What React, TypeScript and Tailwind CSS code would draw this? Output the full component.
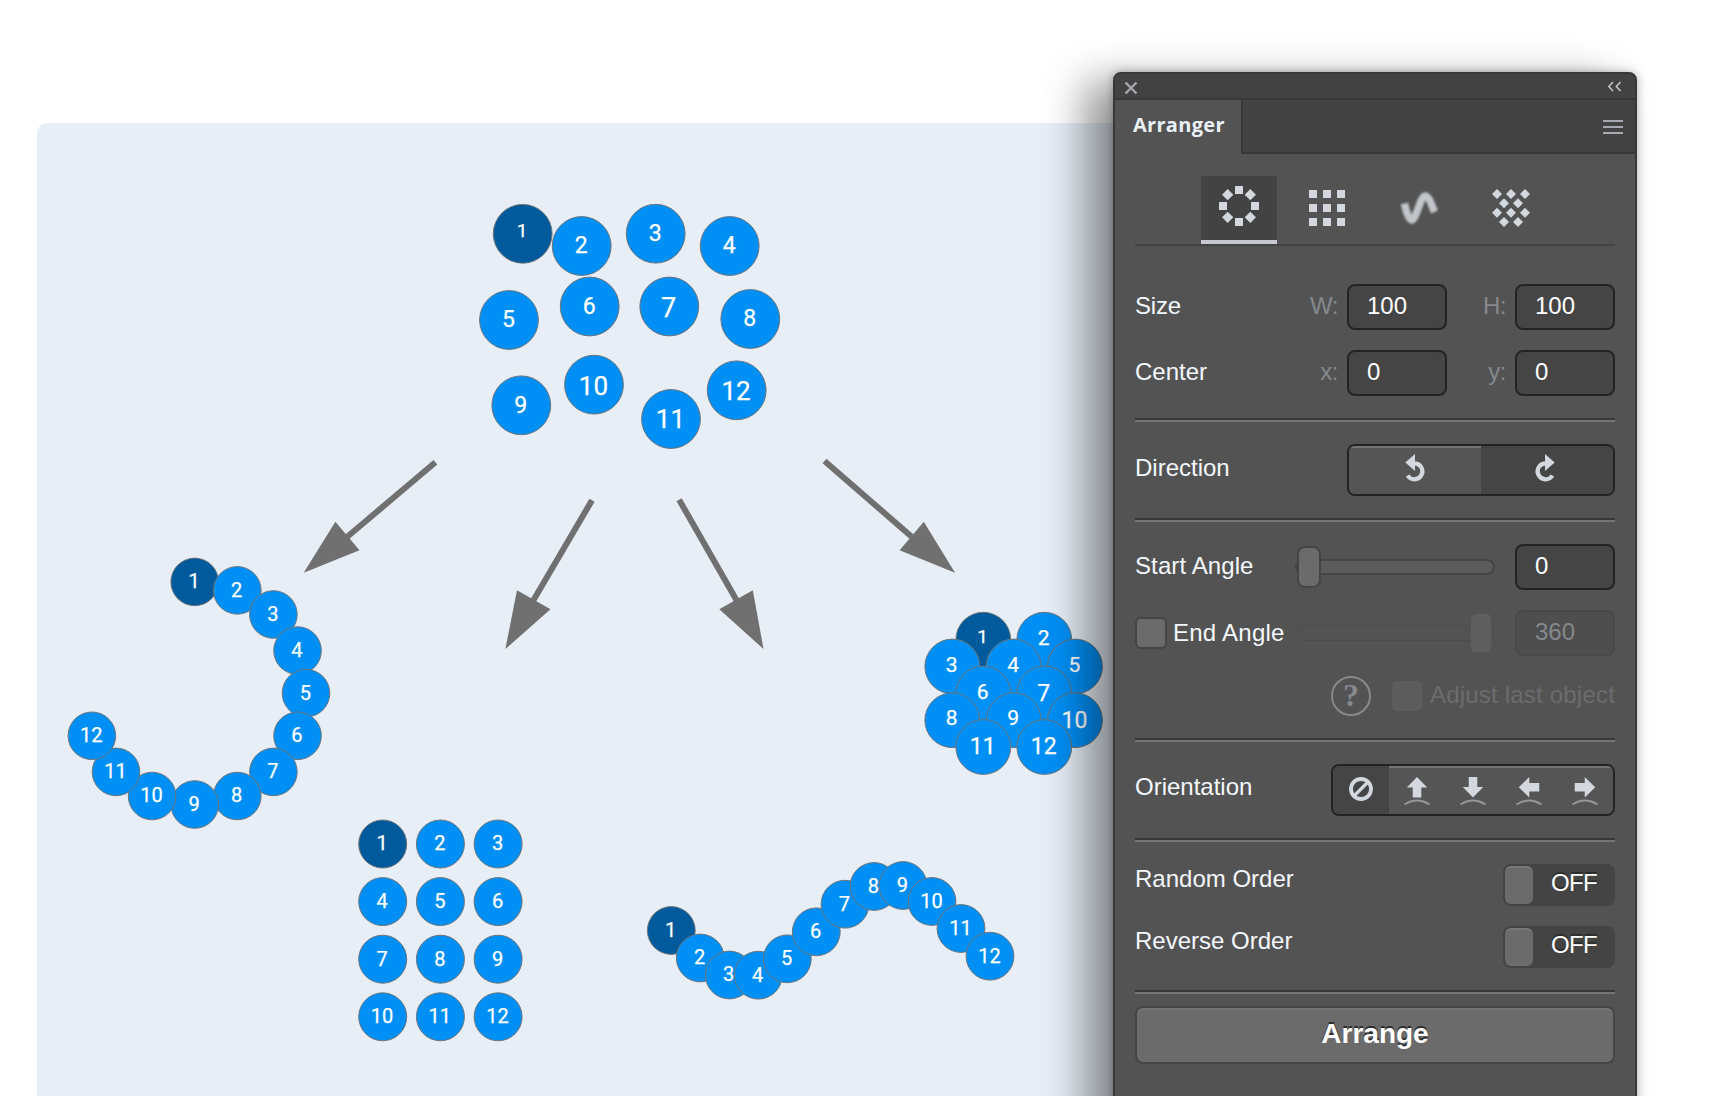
import React, { useState } from "react";
import clsx from "clsx";

type Dot = { x: number; y: number; size?: number; dy?: number };

const scattered: Dot[] = [
  { x: 522.7, y: 233.8, size: 19, dy: -4 },
  { x: 581.7, y: 246, size: 23 },
  { x: 655.7, y: 233.7, size: 23 },
  { x: 729.7, y: 246, size: 23 },
  { x: 509, y: 320, size: 23 },
  { x: 589.7, y: 306.5, size: 23 },
  { x: 669.3, y: 306.5, size: 27, dy: 0.5 },
  { x: 750.3, y: 319, size: 23 },
  { x: 521.3, y: 405.3, size: 23 },
  { x: 594, y: 384.7, size: 26, dy: 1 },
  { x: 671, y: 419, size: 26, dy: 0 },
  { x: 736.7, y: 390.3, size: 26, dy: 0.7 },
];

const ring: Dot[] = Array.from({ length: 12 }, (_v, i) => {
  const a = ((i * 22.5 - 90) * Math.PI) / 180;
  return { x: 194.7 + 111.3 * Math.cos(a), y: 693.2 + 111.3 * Math.sin(a) };
});

const grid: Dot[] = Array.from({ length: 12 }, (_v, i) => ({
  x: 382.7 + (i % 3) * 57.7,
  y: 844 + Math.floor(i / 3) * 57.6,
}));

const wave: Dot[] = [
  { x: 671.3, y: 930.5 },
  { x: 700.3, y: 958 },
  { x: 729.3, y: 975 },
  { x: 758.3, y: 975.2 },
  { x: 787.3, y: 958.8 },
  { x: 816.3, y: 931.8 },
  { x: 845, y: 904.2 },
  { x: 874, y: 886.5 },
  { x: 903, y: 885.5 },
  { x: 932, y: 901.5 },
  { x: 961, y: 928.5 },
  { x: 990, y: 956.2 },
];

const honeycomb: Dot[] = [
  { x: 983.3, y: 639.7, size: 19, dy: -3 },
  { x: 1044.3, y: 639.7, size: 21, dy: -2 },
  { x: 952.3, y: 666.5, size: 21, dy: -2 },
  { x: 1013.7, y: 666.5, size: 21, dy: -1.5 },
  { x: 1075, y: 666.5, size: 21, dy: -1.5 },
  { x: 983.3, y: 693.4, size: 21, dy: -1.5 },
  { x: 1044.3, y: 693.4, size: 23, dy: -0.5 },
  { x: 952.3, y: 720.2, size: 21, dy: -2.5 },
  { x: 1013.7, y: 720.2, size: 21, dy: -2.5 },
  { x: 1075, y: 720.2, size: 23, dy: -0.7 },
  { x: 983.3, y: 747, size: 23, dy: -0.7 },
  { x: 1044.3, y: 747, size: 23, dy: -0.7 },
];

const arrows = [
  { line: [435.4, 462.3, 347, 537], head: "303.7,572.7 335.4,521.7 359.5,550.3" },
  { line: [592, 500.3, 533, 601], head: "505.4,649 517,590.3 550.5,609.3" },
  { line: [679.1, 499.7, 737, 601], head: "763.5,649 752.8,590.3 719.3,609.3" },
  { line: [824.5, 461, 912, 537], head: "955,572.7 923.8,521.7 899.6,550.3" },
];

const Dots = ({ dots, r }: { dots: Dot[]; r: number }) => (
  <g>
    {dots.map((d, i) => {
      const size = d.size ?? 20;
      return (
        <g key={i}>
          <circle
            cx={d.x}
            cy={d.y}
            r={r}
            fill={i === 0 ? "#005a9c" : "#008ff5"}
            stroke="#6f7579"
            strokeWidth="1"
          />
          <text
            x={d.x - 0.6}
            y={d.y + size * 0.356 + (d.dy ?? -0.8)}
            fontSize={size}
            fill="#fff"
            stroke="#fff"
            strokeWidth="0.25"
            textAnchor="middle"
          >
            {i + 1}
          </text>
        </g>
      );
    })}
  </g>
);

const Divider = () => (
  <div className="h-1 shrink-0 border-t-2 border-b-2 border-t-[#383838] border-b-[#757575]" />
);

const Field = ({
  value,
  disabled,
  indent = 18,
}: {
  value: string;
  disabled?: boolean;
  indent?: number;
}) => (
  <div
    className={clsx(
      "flex h-[46px] w-[100px] items-center rounded-lg border-2 pb-[3px]",
      disabled
        ? "border-[#484848] bg-[#4e4e4e] text-[#85888c]"
        : "border-[#232323] bg-[#454545] text-white"
    )}
    style={{ paddingLeft: indent }}
  >
    {value}
  </div>
);

const Hint = ({ children }: { children: React.ReactNode }) => (
  <span className="w-[68px] pr-[9px] pb-[3px] text-right tracking-[-0.5px] text-[#85888c]">
    {children}
  </span>
);

const Toggle = ({ on, onClick }: { on: boolean; onClick: () => void }) => (
  <button
    className={clsx(
      "flex h-[42px] w-28 items-center rounded-lg bg-[#444] p-0.5",
      on && "flex-row-reverse"
    )}
    onClick={onClick}
  >
    <span className="h-[38px] w-7 rounded-md border-t-2 border-[#787878] bg-[#6b6b6b]" />
    <span className="flex-1 pb-[5px] pl-0.5 text-center tracking-[-0.7px] text-white [text-shadow:0_-2px_0_#2c2c2c]">
      {on ? "ON" : "OFF"}
    </span>
  </button>
);

const CircleIcon = () => (
  <svg width="40" height="40" viewBox="-20 -20 40 40" fill="#d2d8de">
    {[0, 45, 90, 135, 180, 225, 270, 315].map((a) => (
      <rect key={a} x="-4" y="-20" width="8" height="8" transform={`rotate(${a})`} />
    ))}
  </svg>
);

const GridIcon = () => (
  <svg width="36" height="36" viewBox="0 0 36 36" fill="#d2d8de">
    {[0, 14, 28].map((y) =>
      [0, 14, 28].map((x) => <rect key={`${x}-${y}`} x={x} y={y} width="8" height="8" />)
    )}
  </svg>
);

const WaveIcon = () => (
  <svg
    className="blur-[1px]"
    width="40"
    height="36"
    viewBox="0 0 40 36"
    fill="none"
    stroke="#c2c6ca"
    strokeWidth="7.500"
    strokeLinejoin="round"
  >
    <path d="M5.500 13.500C7 21 9.500 30 13 30C17 30 21.500 6 26 6C30 6 32 14 35.500 22" />
  </svg>
);

const HoneycombIcon = () => (
  <svg width="40" height="40" viewBox="0 0 40 40" fill="#d2d8de">
    {[
      [6, 6], [20, 6], [34, 6],
      [13, 15.3], [27, 15.3],
      [6, 24.7], [20, 24.7], [34, 24.7],
      [13, 34], [27, 34],
    ].map(([x, y]) => (
      <path key={`${x}-${y}`} d={`M${x} ${y - 5}l5 5-5 5-5-5z`} />
    ))}
  </svg>
);

const TurnIcon = ({ flip }: { flip?: boolean }) => (
  <svg
    className={clsx("mb-[7px]", flip && "mr-1 -scale-x-100")}
    width="24"
    height="30"
    viewBox="0 0 24 30"
  >
    <path d="M12 10.300A8 8 0 1 1 4.600 22.500" fill="none" stroke="#d2d8de" strokeWidth="4.200" />
    <path d="M12 1v17L2.300 9.500z" fill="#d2d8de" />
  </svg>
);

const ArrowIcon = ({ angle }: { angle: number }) => (
  <svg width="28" height="30" viewBox="0 0 28 30">
    <path
      d="M14 1L24.200 11.500H18.300V21.500H9.700V11.500H3.800z"
      fill="#d2d8de"
      transform={`rotate(${angle} 14 11.250)`}
    />
    <path d="M1.500 28.500Q14 20.500 26.500 28.500" fill="none" stroke="#94979c" strokeWidth="1.800" />
  </svg>
);

const tabs = [
  { name: "circle", icon: <CircleIcon />, style: "ml-[66px] w-[76px] pt-[10px]" },
  { name: "grid", icon: <GridIcon />, style: "ml-3 w-[76px] pt-[14px]" },
  { name: "wave", icon: <WaveIcon />, style: "ml-4 w-[76px] pt-[14px]" },
  { name: "honeycomb", icon: <HoneycombIcon />, style: "ml-4 w-[76px] pt-3" },
];

const App = () => {
  const [tab, setTab] = useState<string>("circle");
  const [clockwise, setClockwise] = useState<boolean>(true);
  const [orientation, setOrientation] = useState<number>(0);
  const [random, setRandom] = useState<boolean>(false);
  const [reverse, setReverse] = useState<boolean>(false);

  return (
    <div className="relative h-[1096px] w-full overflow-hidden bg-white pt-[123px] pl-[37px] font-['Liberation_Sans',Arial,sans-serif]">
      <div className="h-[973px] w-[1200px] rounded-tl-[10px] bg-[#e7eef6]">
        <svg
          width="1200"
          height="973"
          viewBox="37 123 1200 973"
          className="font-['Roboto',sans-serif]"
        >
          {arrows.map(({ line: [x1, y1, x2, y2], head }) => (
            <g key={head}>
              <line x1={x1} y1={y1} x2={x2} y2={y2} stroke="#707070" strokeWidth="6" />
              <polygon points={head} fill="#707070" />
            </g>
          ))}
          <Dots dots={scattered} r={29.4} />
          <Dots dots={ring} r={23.8} />
          <Dots dots={grid} r={24} />
          <Dots dots={wave} r={23.9} />
          <Dots dots={honeycomb} r={27.4} />
        </svg>
      </div>

      {/* floating panel */}
      <div className="absolute top-[72px] left-[1113px] flex h-[1060px] w-[524px] flex-col rounded-t-lg border-2 border-[#383838] bg-[#535353] text-2xl leading-7 text-[#f4f8fc] shadow-[-28px_10px_42px_rgba(0,0,0,0.42),0_0_10px_rgba(0,0,0,0.3)]">
        <div className="flex h-[26px] items-center justify-between rounded-t-md border-b-2 border-[#383838] bg-[#424242] pr-[13px] pl-[9px]">
          <svg className="mt-[3px]" width="14" height="14" viewBox="0 0 14 14" stroke="#a3a6ab" strokeWidth="2.400">
            <path d="M1.500 1.500L12.500 12.500M12.500 1.500L1.500 12.500" />
          </svg>
          <svg className="mt-px" width="15" height="11" viewBox="0 0 15 11" fill="none" stroke="#c0c4ca" strokeWidth="1.600">
            <path d="M6 1L1.800 5.500L6 10M13.500 1L9.300 5.500L13.500 10" />
          </svg>
        </div>
        <div className="flex h-[54px]">
          <div className="w-[126px] pt-[11px] pl-[18px] font-['Open_Sans',sans-serif] text-[20px] font-bold tracking-[0.3px] text-[#e9f0f8]">
            Arranger
          </div>
          <div className="flex flex-1 items-start justify-end border-b-2 border-l-2 border-[#383838] bg-[#424242] pt-5 pr-3">
            <div className="flex w-5 flex-col gap-1">
              <span className="h-0.5 bg-[#a6aab0]" />
              <span className="h-0.5 bg-[#a6aab0]" />
              <span className="h-0.5 bg-[#a6aab0]" />
            </div>
          </div>
        </div>

        <div className="flex flex-1 flex-col px-5 pt-[22px]">
          <div className="flex h-[70px] border-b-2 border-[#434343]">
            {tabs.map((t) => (
              <button
                key={t.name}
                className={clsx(
                  "flex h-[68px] items-start justify-center border-b-4",
                  t.style,
                  tab === t.name ? "border-[#c6cad0] bg-[#434343]" : "border-transparent"
                )}
                onClick={() => setTab(t.name)}
              >
                {t.icon}
              </button>
            ))}
          </div>

          <div className="mt-[38px] flex h-[46px] items-center">
            <span className="flex-1 pb-[3px] tracking-[-0.2px]">Size</span>
            <Hint>W:</Hint>
            <Field value="100" />
            <Hint>H:</Hint>
            <Field value="100" />
          </div>
          <div className="mt-5 mb-[22px] flex h-[46px] items-center">
            <span className="flex-1 pb-[3px]">Center</span>
            <Hint>x:</Hint>
            <Field value="0" />
            <Hint>y:</Hint>
            <Field value="0" />
          </div>
          <Divider />

          <div className="my-[22px] flex h-[52px] items-center">
            <span className="flex-1 pb-[5px]">Direction</span>
            <div className="flex h-[52px] w-[268px] overflow-hidden rounded-lg border-2 border-[#232323]">
              {[false, true].map((cw) => (
                <button
                  key={String(cw)}
                  className={clsx(
                    "flex flex-1 items-center justify-center border-t-2",
                    clockwise === cw ? "border-[#434343] bg-[#454545]" : "border-[#757575] bg-[#555]"
                  )}
                  onClick={() => setClockwise(cw)}
                >
                  <TurnIcon flip={cw} />
                </button>
              ))}
            </div>
          </div>
          <Divider />

          <div className="mt-[22px] flex h-[46px] items-center justify-between">
            <span className="w-[160px] pb-[3px] tracking-[0.1px]">Start Angle</span>
            <div className="mr-[20px] flex h-4 w-[200px] items-center rounded-full border-2 border-[#454545] bg-[#5b5b5b]">
              <span className="h-[42px] w-6 rounded-lg border-2 border-[#454545] bg-[#6b6b6b]" />
            </div>
            <Field value="0" />
          </div>
          <div className="mt-5 flex h-[46px] items-center justify-between">
            <label className="flex w-[160px] items-center gap-1.5 whitespace-nowrap tracking-[0.25px]">
              <span className="size-8 rounded-md border-2 border-[#454545] bg-[#6b6b6b]" />
              End Angle
            </label>
            <div className="mr-[20px] flex h-4 w-[200px] items-center justify-end rounded-full border border-dotted border-[#474747]">
              <span className="mr-0.5 h-10 w-[22px] rounded-md border border-dotted border-[#4b4b4b] bg-[#5e5e5e]" />
            </div>
            <Field value="360" disabled />
          </div>
          <div className="mt-5 mb-[22px] flex h-10 items-center justify-end text-[#6b6c6e]">
            <span className="mr-5 flex size-10 items-center justify-center rounded-full border-2 border-[#85888c] pb-[3px] font-['Liberation_Serif',serif] text-[32px] font-bold text-[#85888c]">
              ?
            </span>
            <span className="mr-[7px] size-8 rounded-md border border-dotted border-[#494949] bg-[#5c5c5c]" />
            <span className="pb-0.5 tracking-[0.2px]">Adjust last object</span>
          </div>
          <Divider />

          <div className="my-[22px] flex h-[52px] items-center">
            <span className="flex-1 pb-1.5">Orientation</span>
            <div className="flex h-[52px] w-[284px] overflow-hidden rounded-lg border-2 border-[#232323]">
              {[null, 0, 180, 270, 90].map((angle, idx) => (
                <button
                  key={idx}
                  className={clsx(
                    "flex w-14 items-center justify-center border-t-2",
                    orientation === idx ? "border-[#434343] bg-[#454545]" : "border-[#757575] bg-[#555]"
                  )}
                  onClick={() => setOrientation(idx)}
                >
                  {angle === null ? (
                    <svg className="mb-1" width="24" height="24" viewBox="0 0 24 24" fill="none" stroke="#d2d8de">
                      <circle cx="12" cy="12" r="10" strokeWidth="3.800" />
                      <path d="M5.500 18.500L18.500 5.500" strokeWidth="3.200" />
                    </svg>
                  ) : (
                    <ArrowIcon angle={angle} />
                  )}
                </button>
              ))}
            </div>
          </div>
          <Divider />

          <div className="mt-[22px] flex h-[42px] items-center justify-between">
            <span className="pb-3">Random Order</span>
            <Toggle on={random} onClick={() => setRandom(!random)} />
          </div>
          <div className="mt-5 mb-[22px] flex h-[42px] items-center justify-between">
            <span className="pb-3">Reverse Order</span>
            <Toggle on={reverse} onClick={() => setReverse(!reverse)} />
          </div>
          <Divider />

          <button className="mt-3 h-[58px] rounded-lg border-2 border-[#454545] bg-[#6b6b6b] pb-[3px] text-[28px] font-bold text-white [text-shadow:0_-2px_0_#2c2c2c] shadow-[inset_0_2px_0_#747474]">
            Arrange
          </button>
        </div>
      </div>
    </div>
  );
};

export default App;
